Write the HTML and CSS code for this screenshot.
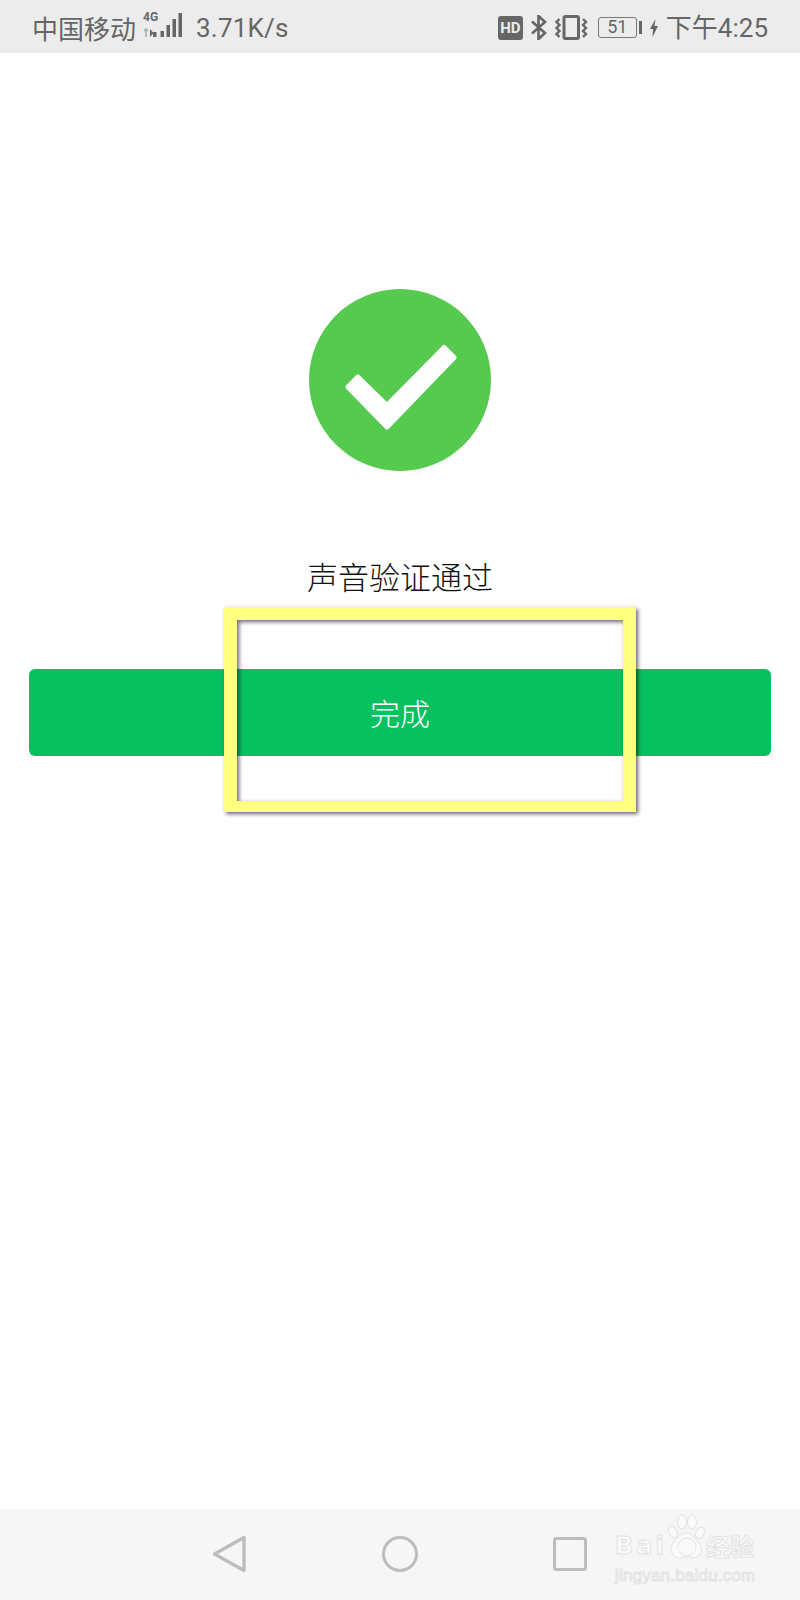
FILE: index.html
```html
<!DOCTYPE html>
<html lang="zh-CN">
<head>
    <meta charset="UTF-8">
    <meta name="viewport" content="width=device-width, initial-scale=1.0">
    <title>声音验证通过</title>
    <link rel="stylesheet" href="styles.css">
</head>
<body>
    <div class="page">
        <div class="status-bar">
            <div class="status-left">
                <span class="carrier">中国移动</span>
                <div class="signal">
                    <span class="signal-type">4G</span>
                    <svg class="signal-bars" width="42" height="26" viewBox="0 0 42 26">
                        <path d="M5 17v8M3 19l2-2 2 2" fill="none" stroke="#b0b0b0" stroke-width="1.600"/>
                        <path d="M9 17l3.500 4-3.500 4z" fill="#666"/>
                        <rect x="12" y="20" width="3.500" height="5" fill="#666"/>
                        <rect x="19.500" y="19" width="3.500" height="6" fill="#666"/>
                        <rect x="25.500" y="13" width="3.500" height="12" fill="#666"/>
                        <rect x="31.500" y="7" width="3.500" height="18" fill="#666"/>
                        <rect x="37.500" y="1" width="3.500" height="24" fill="#666"/>
                    </svg>
                </div>
                <span class="speed">3.71K/s</span>
            </div>
            <div class="status-right">
                <span class="hd-badge">HD</span>
                <svg class="bluetooth" width="16" height="25" viewBox="0 0 16 25">
                    <path d="M1 6.500l13 11.500-6.500 6V1l6.500 6L1 18.500" fill="none" stroke="#666" stroke-width="2.600"/>
                </svg>
                <svg class="vibrate" width="33" height="25" viewBox="0 0 33 25">
                    <rect x="9" y="1.500" width="14.500" height="22" rx="1.500" fill="none" stroke="#666" stroke-width="3"/>
                    <path d="M4.500 4L1.500 7l3 3-3 3 3 3-3 3 3 3M28 4l3 3-3 3 3 3-3 3 3 3-3 3" fill="none" stroke="#666" stroke-width="2.400"/>
                </svg>
                <div class="battery">
                    <span class="battery-body">51</span>
                    <span class="battery-nub"></span>
                </div>
                <svg class="bolt" width="8" height="18" viewBox="0 0 8 18">
                    <path d="M5.500 0L0 10h3l-.5 8L8 7H4.500z" fill="#666"/>
                </svg>
                <span class="clock">下午4:25</span>
            </div>
        </div>

        <div class="content">
            <svg class="success-icon" width="182" height="182" viewBox="0 0 182 182">
                <circle cx="91" cy="91" r="91" fill="#55ca4f"/>
                <polygon points="48.850,88 78,116.500 135.150,58.500 145.050,68.400 78,138 38.950,98" fill="#fff" stroke="#fff" stroke-width="5" stroke-linejoin="round"/>
            </svg>
            <h1 class="result-title">声音验证通过</h1>
            <div class="done-button">完成</div>
        </div>

        <div class="nav-bar">
            <svg width="36" height="38" viewBox="0 0 36 38">
                <path d="M3.500 19L33 2.500v33z" fill="none" stroke="#bdbdbd" stroke-width="3.400" stroke-linejoin="round"/>
            </svg>
            <svg width="36" height="38" viewBox="0 0 36 38">
                <circle cx="18" cy="19" r="16.500" fill="none" stroke="#bdbdbd" stroke-width="3"/>
            </svg>
            <svg width="36" height="38" viewBox="0 0 36 38">
                <rect x="1.500" y="3.500" width="31" height="31" rx="2" fill="none" stroke="#bdbdbd" stroke-width="3"/>
            </svg>
        </div>

        <!-- annotation frame drawn over the screenshot -->
        <div class="highlight-frame"></div>

        <div class="watermark">
            <div class="watermark-top">
                <span class="wm-bai">Bai</span>
                <svg class="wm-paw" width="37" height="46" viewBox="0 0 37 46">
                    <g fill="#fafafa" stroke="#e3e3e3" stroke-width="1">
                        <ellipse cx="5" cy="18" rx="4" ry="6" transform="rotate(-25 5 18)"/>
                        <ellipse cx="14" cy="8" rx="4.500" ry="7"/>
                        <ellipse cx="24" cy="8" rx="4.500" ry="7"/>
                        <ellipse cx="32" cy="19" rx="4" ry="6" transform="rotate(25 32 19)"/>
                        <path d="M19 19c6 0 7 6 12 10 5 6 2 15-6 15-3 0-4-1-6-1-3 0-5 2-9 1-7-2-9-9-5-15 4-4 6-10 14-10z"/>
                        <circle cx="19" cy="33" r="9"/>
                    </g>
                    <text class="wm-du" x="19" y="38" text-anchor="middle">du</text>
                </svg>
                <span class="wm-jingyan">经验</span>
            </div>
            <div class="watermark-url">jingyan.baidu.com</div>
        </div>
    </div>
</body>
</html>
```

FILE: styles.css
```css
* {
    margin: 0;
    padding: 0;
    box-sizing: border-box;
}

body {
    font-family: Roboto, "Noto Sans CJK SC", sans-serif;
    background-color: #fff;
}

.page {
    position: relative;
    display: flex;
    flex-direction: column;
    width: 800px;
    height: 1600px;
    overflow: hidden;
}

/* status bar */
.status-bar {
    display: flex;
    justify-content: space-between;
    align-items: center;
    height: 53px;
    padding: 2px 32px 0 32px;
    background-color: #ececec;
    color: #666;
    font-size: 26px;
}

.status-left,
.status-right {
    display: flex;
    align-items: center;
}

.carrier {
    font-family: "Noto Sans CJK SC", sans-serif;
    font-size: 26px;
    line-height: 30px;
}

.signal {
    position: relative;
    margin-top: -5px;
    margin-left: 5px;
    width: 42px;
    height: 26px;
}

.signal-type {
    position: absolute;
    left: 2px;
    top: -1px;
    font-size: 12px;
    line-height: 13px;
    font-weight: 700;
}

.signal-bars {
    display: block;
}

.speed {
    margin-left: 13px;
    font-size: 26px;
    line-height: 30px;
    letter-spacing: 0.200px;
}

.hd-badge {
    width: 25px;
    height: 24px;
    border-radius: 3px;
    background-color: #666;
    color: #eee;
    font-size: 15px;
    font-weight: 700;
    line-height: 24px;
    text-align: center;
}

.bluetooth {
    margin-left: 8px;
}

.vibrate {
    margin-left: 8px;
}

.battery {
    display: flex;
    align-items: center;
    margin-left: 10px;
}

.battery-body {
    width: 39px;
    height: 21px;
    border: 1.500px solid #777;
    border-radius: 3px;
    font-size: 18px;
    line-height: 18px;
    text-align: center;
}

.battery-nub {
    width: 3px;
    height: 13px;
    margin-left: 2px;
    background-color: #666;
}

.bolt {
    margin-left: 8px;
}

.clock {
    margin-left: 8px;
    font-family: Roboto, "Noto Sans CJK SC", sans-serif;
    font-size: 26px;
    line-height: 30px;
}

/* main content */
.content {
    flex: 1;
    display: flex;
    flex-direction: column;
    align-items: center;
    padding: 236px 29px 0;
}

.success-icon {
    display: block;
}

.result-title {
    margin-top: 85px;
    font-family: "Noto Sans CJK SC", sans-serif;
    font-size: 31px;
    font-weight: 300;
    line-height: 40px;
    color: #111;
}

.done-button {
    width: 100%;
    height: 87px;
    margin-top: 73px;
    border-radius: 6px;
    background-color: #07c160;
    color: #fff;
    font-family: "Noto Sans CJK SC", sans-serif;
    font-size: 30px;
    font-weight: 300;
    line-height: 87px;
    text-align: center;
}

/* bottom navigation */
.nav-bar {
    display: flex;
    justify-content: center;
    align-items: center;
    gap: 135px;
    height: 91px;
    padding-bottom: 1px;
    background-color: #f6f6f6;
}

.highlight-frame {
    position: absolute;
    left: 224px;
    top: 607px;
    width: 412px;
    height: 205px;
    border: 13px solid #ffff80;
    border-bottom-width: 11px;
    box-shadow: 2px 2px 4px rgba(0, 0, 0, 0.6), inset 2px 2px 4px rgba(0, 0, 0, 0.6);
}

/* baidu watermark */
.watermark {
    position: absolute;
    left: 615px;
    top: 1514px;
    width: 150px;
    color: #fafafa;
    -webkit-text-stroke: 1px #e3e3e3;
}

.watermark-top {
    display: flex;
    align-items: flex-end;
    height: 46px;
}

.wm-bai {
    width: 53px;
    font-family: "DejaVu Sans", sans-serif;
    font-size: 24px;
    font-weight: 700;
    line-height: 28px;
    letter-spacing: 3px;
}

.wm-du {
    font-family: "Liberation Sans", sans-serif;
    font-size: 15px;
    font-weight: 700;
    fill: #fafafa;
}

.wm-jingyan {
    margin-left: 1px;
    font-family: "Noto Sans CJK SC", sans-serif;
    font-size: 24px;
    font-weight: 700;
    line-height: 28px;
}

.watermark-url {
    margin-top: 6px;
    font-family: "Liberation Sans", sans-serif;
    font-size: 17px;
    line-height: 20px;
    letter-spacing: 0.200px;
    white-space: nowrap;
}
```
